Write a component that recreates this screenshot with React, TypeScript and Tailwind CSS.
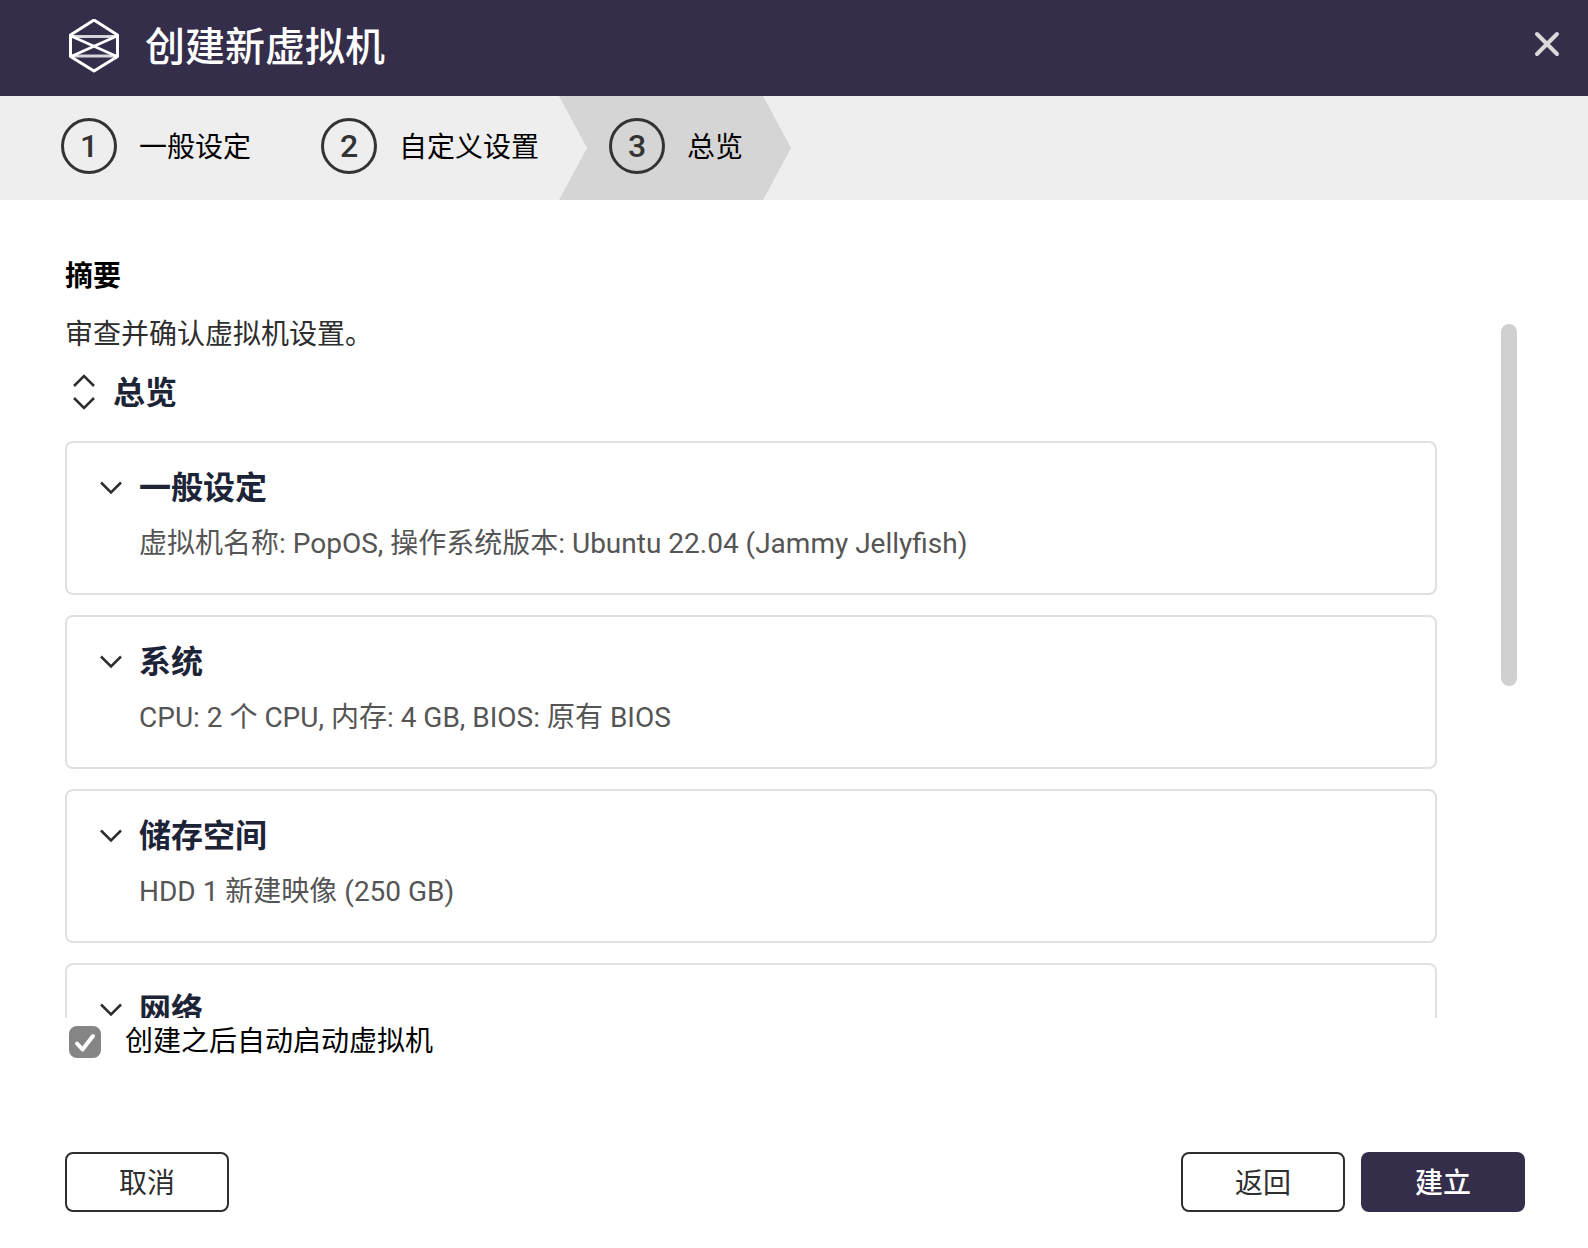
import { useState } from "react";

const sections = [
  { title: "一般设定", detail: "虚拟机名称: PopOS, 操作系统版本: Ubuntu 22.04 (Jammy Jellyfish)" },
  { title: "系统", detail: "CPU: 2 个 CPU, 内存: 4 GB, BIOS: 原有 BIOS" },
  { title: "储存空间", detail: "HDD 1 新建映像 (250 GB)" },
  { title: "网络", detail: "" },
];

function Logo() {
  return (
    <svg aria-hidden="true" width="50" height="54" viewBox="0 0 50 54" fill="none" stroke="#fff" strokeLinejoin="round">
      <path d="M25 1 48.500 16v21.500L25 52 1.500 37.500V16Z" strokeWidth="3" />
      <path d="M2 17.500h46M2 37h46" strokeWidth="3" opacity="0.8" />
      <path d="M2 17 48 37.500M48 17 2 37.500" strokeWidth="2.600" />
    </svg>
  );
}

function Chevron() {
  return (
    <svg aria-hidden="true" width="22" height="14" viewBox="0 0 22 14" fill="none" stroke="#2e2e2e" strokeWidth="2.500">
      <path d="M1 1.500 11 11.500 21 1.500" />
    </svg>
  );
}

function StepLabel({ number, label }: { number: number; label: string }) {
  return (
    <>
      <span className="flex size-14 items-center justify-center rounded-full border-3 border-[#333333] text-[32px] leading-none font-medium text-[#333333]">
        {number}
      </span>
      <span className="pt-1 text-[28px] leading-10">{label}</span>
    </>
  );
}

function Card({ title, detail }: { title: string; detail: string }) {
  return (
    <article className="min-h-[154px] rounded-lg border-2 border-[#e0e0e0] pt-[23px] pb-[27px] pl-[33px]">
      <h3>
        <button type="button" className="flex items-center gap-[17px] text-[32px] leading-[44px] font-bold text-[#1d2438]">
          <Chevron />
          {title}
        </button>
      </h3>
      {detail && <p className="mt-3 pl-[39px] text-[28px] leading-[44px] text-[#555555]">{detail}</p>}
    </article>
  );
}

export default function App() {
  const [autoStart, setAutoStart] = useState(true);
  return (
    <div
      lang="zh-CN"
      className="flex h-screen flex-col bg-white font-[Roboto,'Noto_Sans_CJK_SC',sans-serif] text-black"
    >
      <header className="flex h-24 shrink-0 items-center bg-[#342e4b] pr-7 pb-1 pl-[69px] text-white">
        <Logo />
        <h1 className="ml-[26px] flex-1 pt-1 text-[40px] leading-[56px] font-medium">创建新虚拟机</h1>
        <button type="button" aria-label="关闭" className="pb-1">
          <svg aria-hidden="true" width="26" height="26" viewBox="0 0 26 26" stroke="#dadada" strokeWidth="4" strokeLinecap="round">
            <path d="M3 3 23 23M23 3 3 23" />
          </svg>
        </button>
      </header>

      <nav aria-label="步骤" className="shrink-0 bg-[#eeeeee]">
        <ol className="flex h-26 pl-[61px]">
          <li className="flex items-center gap-[22px] pb-1">
            <StepLabel number={1} label="一般设定" />
          </li>
          <li className="ml-[70px] flex items-center gap-[22px] pb-1">
            <StepLabel number={2} label="自定义设置" />
          </li>
          <li
            aria-current="step"
            className="ml-5 flex items-center gap-[22px] bg-[#d5d5d5] pr-12 pb-1 pl-[50px] [clip-path:polygon(0_0,calc(100%-28px)_0,100%_50%,calc(100%-28px)_100%,0_100%,28px_50%)]"
          >
            <StepLabel number={3} label="总览" />
          </li>
        </ol>
      </nav>

      <main className="flex min-h-0 flex-1 flex-col pr-[63px] pl-[65px]">
        <h2 className="shrink-0 pt-[57px] pb-1.5 text-[28px] leading-10 font-bold">摘要</h2>
        <div className="flex min-h-0 flex-1">
          <section className="min-w-0 flex-1 overflow-y-auto [scrollbar-width:none]">
            <p className="pt-2.5 text-[28px] leading-11 text-[#2e2e2e]">审查并确认虚拟机设置。</p>
            <button
              type="button"
              className="mt-3.5 flex items-center gap-[18px] pl-2 text-[32px] leading-[44px] font-bold text-[#1d2438]"
            >
              <svg aria-hidden="true" width="22" height="38" viewBox="0 0 22 38" fill="none" stroke="#2e2e2e" strokeWidth="2.500">
                <path d="M1 12 11 2 21 12M1 24 11 34 21 24" />
              </svg>
              总览
            </button>
            <div className="mt-[26px] flex flex-col gap-5">
              {sections.map((s) => (
                <Card key={s.title} title={s.title} detail={s.detail} />
              ))}
            </div>
          </section>
          <div className="ml-16 pt-[21px] pr-2">
            <div className="h-[362px] w-4 rounded-full bg-[#d0d0d0]" />
          </div>
        </div>
        <label className="flex shrink-0 items-center self-start pt-0.5 pl-1 text-[28px] leading-11">
          <input
            type="checkbox"
            checked={autoStart}
            onChange={(e) => setAutoStart(e.target.checked)}
            className="peer size-8 appearance-none rounded-lg border-2 border-[#858585] checked:bg-[#858585]"
          />
          <svg
            aria-hidden="true"
            width="32"
            height="32"
            viewBox="0 0 32 32"
            fill="none"
            stroke="#fff"
            strokeWidth="4"
            strokeLinecap="round"
            strokeLinejoin="round"
            className="pointer-events-none invisible -ml-8 peer-checked:visible"
          >
            <path d="M8 17.500 13.500 23.500 24 10" />
          </svg>
          <span className="ml-6">创建之后自动启动虚拟机</span>
        </label>
      </main>

      <footer className="flex shrink-0 gap-4 pt-22 pr-[63px] pb-9 pl-[65px] text-[28px] leading-10 text-[#2e2e2e]">
        <button type="button" className="mr-auto h-15 w-41 rounded-lg border-2 border-[#2e2e2e] pt-1">
          取消
        </button>
        <button type="button" className="h-15 w-41 rounded-lg border-2 border-[#2e2e2e] pt-1">
          返回
        </button>
        <button type="button" className="h-15 w-41 rounded-lg bg-[#342e4b] pt-1 font-medium text-white">
          建立
        </button>
      </footer>
    </div>
  );
}
